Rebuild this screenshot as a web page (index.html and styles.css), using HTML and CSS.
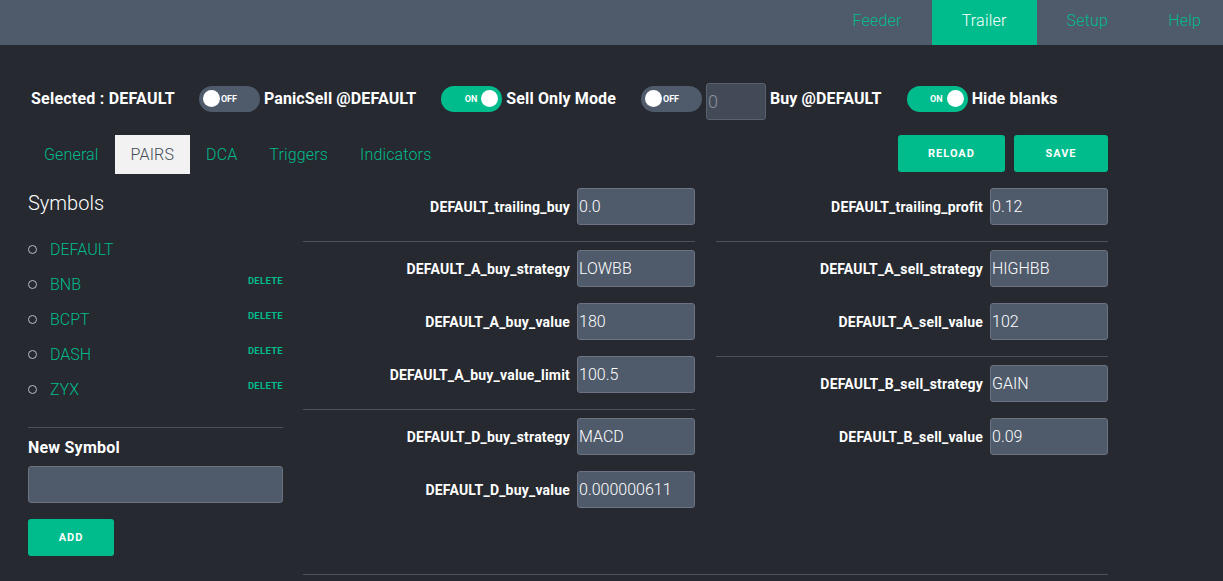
FILE: index.html
```html
<!DOCTYPE html>
<html lang="en">
<head>
<meta charset="utf-8">
<title>Trailer</title>
<link rel="stylesheet" href="styles.css">
</head>
<body>
<header class="topnav">
  <nav class="topnav-list">
    <a class="topnav-item" href="#">Feeder</a>
    <a class="topnav-item active" href="#">Trailer</a>
    <a class="topnav-item" href="#">Setup</a>
    <a class="topnav-item" href="#">Help</a>
  </nav>
</header>

<main class="page">
  <div class="controls">
    <span class="selected">Selected : DEFAULT</span>
    <div class="ctl">
      <span class="toggle off"><span class="knob"></span><span class="tlabel">OFF</span></span>
      <span class="ctl-label">PanicSell @DEFAULT</span>
    </div>
    <div class="ctl">
      <span class="toggle on"><span class="tlabel">ON</span><span class="knob"></span></span>
      <span class="ctl-label">Sell Only Mode</span>
    </div>
    <div class="ctl">
      <span class="toggle off"><span class="knob"></span><span class="tlabel">OFF</span></span>
      <span class="small-input">0</span>
      <span class="ctl-label">Buy @DEFAULT</span>
    </div>
    <div class="ctl">
      <span class="toggle on"><span class="tlabel">ON</span><span class="knob"></span></span>
      <span class="ctl-label">Hide blanks</span>
    </div>
  </div>

  <div class="tabbar">
    <div class="tabs">
      <a class="tab" href="#">General</a>
      <a class="tab active" href="#">PAIRS</a>
      <a class="tab" href="#">DCA</a>
      <a class="tab" href="#">Triggers</a>
      <a class="tab" href="#">Indicators</a>
    </div>
    <div class="actions">
      <button class="btn btn-reload">RELOAD</button>
      <button class="btn btn-save">SAVE</button>
    </div>
  </div>

  <div class="content">
    <aside class="sidebar">
      <h2 class="sb-title">Symbols</h2>
      <ul class="symbols">
        <li><a href="#">DEFAULT</a></li>
        <li><a href="#">BNB</a><span class="del">DELETE</span></li>
        <li><a href="#">BCPT</a><span class="del">DELETE</span></li>
        <li><a href="#">DASH</a><span class="del">DELETE</span></li>
        <li><a href="#">ZYX</a><span class="del">DELETE</span></li>
      </ul>
      <hr class="sb-rule">
      <div class="ns-label">New Symbol</div>
      <div class="ns-input"></div>
      <button class="btn add">ADD</button>
    </aside>

    <section class="fields">
      <div class="cols">
        <div class="col">
          <div class="field"><span class="flabel">DEFAULT_trailing_buy</span><span class="fval">0.0</span></div>
          <hr class="rule">
          <div class="field"><span class="flabel">DEFAULT_A_buy_strategy</span><span class="fval">LOWBB</span></div>
          <div class="field"><span class="flabel">DEFAULT_A_buy_value</span><span class="fval">180</span></div>
          <div class="field"><span class="flabel">DEFAULT_A_buy_value_limit</span><span class="fval">100.5</span></div>
          <hr class="rule">
          <div class="field"><span class="flabel">DEFAULT_D_buy_strategy</span><span class="fval">MACD</span></div>
          <div class="field"><span class="flabel">DEFAULT_D_buy_value</span><span class="fval">0.000000611</span></div>
        </div>
        <div class="col">
          <div class="field"><span class="flabel">DEFAULT_trailing_profit</span><span class="fval">0.12</span></div>
          <hr class="rule">
          <div class="field"><span class="flabel">DEFAULT_A_sell_strategy</span><span class="fval">HIGHBB</span></div>
          <div class="field"><span class="flabel">DEFAULT_A_sell_value</span><span class="fval">102</span></div>
          <hr class="rule">
          <div class="field"><span class="flabel">DEFAULT_B_sell_strategy</span><span class="fval">GAIN</span></div>
          <div class="field"><span class="flabel">DEFAULT_B_sell_value</span><span class="fval">0.09</span></div>
        </div>
      </div>
      <hr class="rule bottom">
    </section>
  </div>
</main>
</body>
</html>
```

FILE: styles.css
```css
* { box-sizing: border-box; }

html, body {
  margin: 0;
  padding: 0;
  background: #262930;
  overflow: hidden;
}

body {
  font-family: Roboto, "Liberation Sans", sans-serif;
  color: #ffffff;
  width: 1223px;
  height: 581px;
}

a { text-decoration: none; }

/* top navigation */
.topnav {
  height: 45px;
  background: #4f5b6b;
  display: flex;
  justify-content: flex-end;
  overflow: hidden;
}

.topnav-list {
  display: flex;
  margin-right: -8px;
}

.topnav-item {
  display: block;
  height: 45px;
  line-height: 41px;
  padding: 0 30px;
  font-size: 16px;
  font-weight: 300;
  letter-spacing: 0.2px;
  color: #00bc8c;
}

.topnav-item.active {
  background: #00bc8c;
  color: #ffffff;
}

.page {
  padding-left: 28px;
  width: 1108px;
}

/* controls row */
.controls {
  margin-top: 35px;
  height: 37px;
  display: flex;
  align-items: center;
  padding-left: 3px;
}

.selected {
  font-size: 16px;
  font-weight: 700;
  letter-spacing: 0.22px;
  margin-right: 24px;
}

.ctl {
  display: flex;
  align-items: center;
  margin-right: 25px;
}

.ctl-label {
  font-size: 16px;
  font-weight: 700;
  letter-spacing: 0.12px;
  margin-left: 4px;
}

.toggle {
  width: 61px;
  height: 26px;
  border-radius: 13px;
  display: flex;
  align-items: center;
  padding: 0 4px;
}

.toggle.off {
  background: #4f5b6b;
  justify-content: flex-start;
}

.toggle.on {
  background: #00bc8c;
  justify-content: flex-end;
}

.knob {
  width: 17px;
  height: 17px;
  border-radius: 50%;
  background: #ffffff;
}

.tlabel {
  font-size: 9px;
  font-weight: 700;
  color: #ffffff;
}

.toggle.off .tlabel { margin-left: 1px; }
.toggle.on .tlabel { margin-right: 4px; }

.small-input {
  width: 60px;
  height: 37px;
  margin-left: 4px;
  margin-top: 5px;
  background: #434a57;
  border: 1px solid #5a6270;
  border-radius: 3px;
  color: #8a9099;
  font-size: 18px;
  font-weight: 300;
  line-height: 35px;
  padding-left: 1px;
}

/* tabs row */
.tabbar {
  margin-top: 18px;
  height: 39px;
  display: flex;
  justify-content: space-between;
}

.tabs {
  display: flex;
}

.tab {
  display: block;
  height: 39px;
  line-height: 39px;
  padding: 0 16px;
  font-size: 16px;
  font-weight: 300;
  letter-spacing: 0.15px;
  color: #00bc8c;
}

.tab.active {
  background: #f2f2f2;
  color: #444b55;
}

.actions {
  display: flex;
  gap: 9px;
}

.btn {
  height: 37px;
  padding: 0;
  border: none;
  border-radius: 3px;
  background: #00bc8c;
  color: #ffffff;
  font-family: Roboto, "Liberation Sans", sans-serif;
  font-size: 11px;
  font-weight: 700;
  letter-spacing: 1px;
}

.btn-reload { width: 107px; }
.btn-save { width: 94px; }

/* content */
.content {
  margin-top: 14px;
  display: flex;
  gap: 20px;
}

.sidebar {
  width: 255px;
}

.sb-title {
  margin: 3px 0 0;
  font-size: 20px;
  font-weight: 300;
  line-height: 24px;
  color: #ffffff;
}

.symbols {
  list-style: none;
  margin: 17px 0 0;
  padding: 0;
}

.symbols li {
  height: 35px;
  display: flex;
  align-items: center;
}

.symbols li::before {
  content: "";
  width: 7px;
  height: 7px;
  border: 1.5px solid #b9bcc2;
  border-radius: 50%;
  margin-left: 0;
  margin-right: 13px;
}

.symbols a {
  font-size: 16px;
  font-weight: 300;
  color: #00bc8c;
}

.del {
  margin-left: auto;
  margin-bottom: 8px;
  font-size: 9.5px;
  font-weight: 700;
  color: #00bc8c;
  letter-spacing: 0.3px;
}

.sb-rule {
  margin: 20px 0 0;
  border: none;
  border-top: 1px solid #4d515a;
}

.ns-label {
  margin-top: 10px;
  font-size: 16px;
  font-weight: 700;
  letter-spacing: 0.22px;
  line-height: 20px;
}

.ns-input {
  margin-top: 8px;
  height: 37px;
  background: #4f5b6b;
  border: 1px solid #6b7382;
  border-radius: 3px;
}

.btn.add {
  margin-top: 16px;
  width: 86px;
}

/* fields */
.fields {
  width: 805px;
}

.cols {
  display: flex;
  gap: 21px;
}

.col {
  width: 392px;
}

.field {
  height: 37px;
  margin-bottom: 16px;
  display: flex;
  align-items: center;
  justify-content: flex-end;
}

.flabel {
  font-size: 14px;
  font-weight: 700;
  letter-spacing: 0.2px;
  margin-right: 7px;
}

.fval {
  width: 118px;
  height: 37px;
  background: #4f5b6b;
  border: 1px solid #6b7382;
  border-radius: 3px;
  font-size: 16px;
  font-weight: 300;
  line-height: 35px;
  padding-left: 1px;
  color: #ffffff;
}

.rule {
  margin: 0 0 8px;
  border: none;
  border-top: 1px solid #4d515a;
}

.rule.bottom {
  margin-top: 50px;
}
```
